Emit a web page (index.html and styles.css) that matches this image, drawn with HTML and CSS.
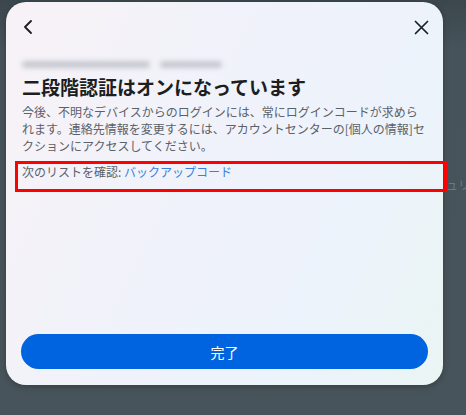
FILE: index.html
```html
<!DOCTYPE html>
<html lang="ja">
<head>
    <meta charset="UTF-8">
    <meta name="viewport" content="width=device-width, initial-scale=1.0">
    <title>二段階認証</title>
    <link rel="stylesheet" href="styles.css">
</head>
<body>
    <div class="backdrop-text">ュリ</div>

    <div class="modal">
        <div class="modal-header">
            <button class="icon-btn" aria-label="戻る">
                <svg width="10" height="14" viewBox="0 0 10 14">
                    <path d="M8 1 L2 7 L8 13" fill="none" stroke="#1c1e21" stroke-width="1.8" stroke-linecap="round" stroke-linejoin="round"/>
                </svg>
            </button>
            <button class="icon-btn" aria-label="閉じる">
                <svg width="15" height="15" viewBox="0 0 15 15">
                    <path d="M1.5 1.5 L13.5 13.5 M13.5 1.5 L1.5 13.5" fill="none" stroke="#1c1e21" stroke-width="1.7" stroke-linecap="round"/>
                </svg>
            </button>
        </div>

        <div class="account">
            <span class="blur blur-long"></span>
            <span class="blur blur-short"></span>
        </div>

        <h1 class="title">二段階認証はオンになっています</h1>
        <p class="desc">今後、不明なデバイスからのログインには、常にログインコードが求められます。連絡先情報を変更するには、アカウントセンターの[個人の情報]セクションにアクセスしてください。</p>
        <p class="check">次のリストを確認: <a href="#">バックアップコード</a></p>

        <div class="spacer"></div>

        <button class="done">完了</button>
    </div>

    <div class="highlight"></div>
</body>
</html>
```

FILE: styles.css
```css
body {
    margin: 0;
    width: 466px;
    height: 415px;
    overflow: hidden;
    font-family: "Noto Sans CJK JP", "Noto Sans", sans-serif;
    background: linear-gradient(180deg, #3b464d 0%, #47535a 12%, #48545b 100%);
    padding: 2px 0 0 6px;
    box-sizing: border-box;
    position: relative;
}
.backdrop-text {
    position: absolute;
    left: 446px;
    top: 176px;
    font-size: 12px;
    white-space: nowrap;
    color: #6e787e;
}
.modal {
    width: 437px;
    height: 383px;
    box-sizing: border-box;
    border-radius: 20px;
    background: linear-gradient(115deg, #f8f2f7 0%, #f0f2fb 45%, #ecf3fb 75%, #eaf5f3 100%);
    padding: 0 15px 16px;
    display: flex;
    flex-direction: column;
    box-shadow: 0 2px 6px rgba(0,0,0,0.25);
}
.modal-header {
    height: 50px;
    display: flex;
    align-items: center;
    justify-content: space-between;
    margin: 0 -5px;
}
.icon-btn {
    background: none;
    border: none;
    padding: 0;
    width: 24px;
    height: 24px;
    display: flex;
    align-items: center;
    justify-content: center;
    cursor: pointer;
}
.account {
    display: flex;
    gap: 10px;
    margin: 8px 0 0 0;
    padding-left: 1px;
    height: 8px;
}
.blur {
    display: block;
    height: 7px;
    margin-top: 1px;
    border-radius: 4px;
    background: #c6c8d0;
    filter: blur(2.5px);
}
.blur-long {
    width: 128px;
}
.blur-short {
    width: 62px;
}
.title {
    margin: 7px 0 0;
    padding-left: 1px;
    font-size: 19px;
    line-height: 24px;
    font-weight: bold;
    color: #1c1e21;
}
.desc {
    margin: 4px 0 0;
    padding-left: 1px;
    font-size: 12px;
    line-height: 17px;
    color: #5b6168;
}
.check {
    margin: 9px 0 0;
    padding-left: 1px;
    font-size: 12px;
    line-height: 17px;
    color: #5b6168;
}
.check a {
    color: #3a7fe0;
    text-decoration: none;
}
.spacer {
    flex: 1;
}
.done {
    height: 35px;
    border: none;
    border-radius: 18px;
    background: #0064e0;
    color: #ffffff;
    font-family: inherit;
    font-size: 14px;
    cursor: pointer;
}
.highlight {
    position: absolute;
    left: 15px;
    top: 161px;
    width: 432px;
    height: 31px;
    box-sizing: border-box;
    border: 3px solid #ff0000;
}
```
